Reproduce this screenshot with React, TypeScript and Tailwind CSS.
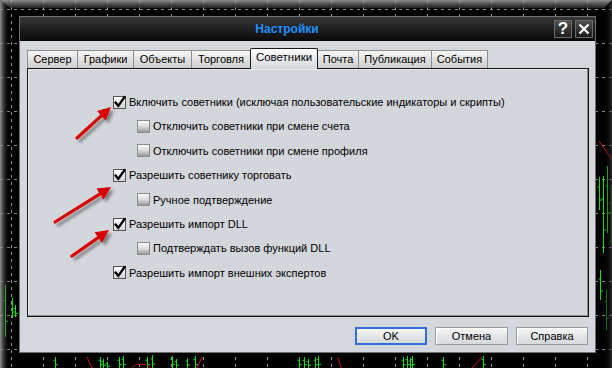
import React from "react";

type Row = { label: string; checked: boolean; indent: boolean };

const rows: Row[] = [
  { label: "Включить советники (исключая пользовательские индикаторы и скрипты)", checked: true, indent: false },
  { label: "Отключить советники при смене счета", checked: false, indent: true },
  { label: "Отключить советники при смене профиля", checked: false, indent: true },
  { label: "Разрешить советнику торговать", checked: true, indent: false },
  { label: "Ручное подтверждение", checked: false, indent: true },
  { label: "Разрешить импорт DLL", checked: true, indent: false },
  { label: "Подтверждать вызов функций DLL", checked: false, indent: true },
  { label: "Разрешить импорт внешних экспертов", checked: true, indent: false },
];

const tabs: { label: string; w: number; active?: boolean }[] = [
  { label: "Сервер", w: 50 },
  { label: "Графики", w: 56 },
  { label: "Объекты", w: 58 },
  { label: "Торговля", w: 59 },
  { label: "Советники", w: 68, active: true },
  { label: "Почта", w: 40 },
  { label: "Публикация", w: 73 },
  { label: "События", w: 57 },
];

function Box({ checked }: { checked: boolean }) {
  return checked ? (
    <span className="relative w-[13px] h-[13px] shrink-0 border border-[#555] bg-gradient-to-b from-[#ffffff] to-[#d6d6d6]">
      <svg className="absolute left-0 top-0 overflow-visible" width="11" height="11" viewBox="0 0 11 11">
        <path d="M1.6 5.6 L4.3 8.8 L10.4 0.2" stroke="#000" strokeWidth="2.3" fill="none" strokeLinecap="square" />
      </svg>
    </span>
  ) : (
    <span className="w-[13px] h-[13px] shrink-0 border border-[#8a8a8a] bg-gradient-to-b from-[#fafafa] via-[#dcdcdc] to-[#9a9a9a]" />
  );
}

function Arrow({ x1, y1, x2, y2 }: { x1: number; y1: number; x2: number; y2: number }) {
  const dx = x2 - x1;
  const dy = y2 - y1;
  const len = Math.sqrt(dx * dx + dy * dy);
  const ux = dx / len;
  const uy = dy / len;
  const hl = 13;
  const hw = 6.5;
  const bx = x2 - ux * hl;
  const by = y2 - uy * hl;
  const px = -uy;
  const py = ux;
  const pts = `${x2},${y2} ${bx + px * hw},${by + py * hw} ${bx - px * hw},${by - py * hw}`;
  return (
    <g filter="url(#ash)">
      <line x1={x1} y1={y1} x2={bx + ux * 2} y2={by + uy * 2} stroke="#d80000" strokeWidth="3.2" strokeLinecap="round" />
      <polygon points={pts} fill="#d80000" />
    </g>
  );
}

function Chart() {
  const vx: number[] = [];
  for (let x = 11; x <= 611; x += 32) vx.push(x);
  const hy: number[] = [];
  for (let y = 9; y <= 360; y += 34) hy.push(y);
  const green: [number, number, number, string?][] = [
    [5, 285, 337], [12, 298, 318], [15, 305, 317],
    [599, 177, 210], [603, 176, 253], [607, 166, 233], [611, 185, 245, "#0a8a0a"],
    [600, 270, 300], [606, 290, 330, "#0a8a0a"],
    [55, 357, 368], [100, 357, 368], [103, 359, 368], [107, 362, 368], [119, 357, 368], [123, 356, 368],
    [147, 357, 368], [152, 355, 368], [172, 356, 368], [176, 359, 368], [187, 358, 368], [195, 356, 368],
    [299, 357, 368], [304, 357, 368], [308, 359, 368], [315, 357, 368], [318, 356, 368],
    [403, 357, 368], [407, 356, 368], [410, 358, 368], [412, 356, 368], [443, 357, 368], [483, 356, 368],
  ];
  return (
    <svg className="absolute left-0 top-0" width="612" height="368" viewBox="0 0 612 368">
      <defs>
        <linearGradient id="topb" x1="0" y1="0" x2="0" y2="1">
          <stop offset="0" stopColor="#a8a8a8" stopOpacity="0.85" />
          <stop offset="1" stopColor="#3a3a3a" stopOpacity="0.6" />
        </linearGradient>
        <linearGradient id="leftb" x1="0" y1="0" x2="1" y2="0">
          <stop offset="0" stopColor="#a0a0a0" stopOpacity="0.9" />
          <stop offset="1" stopColor="#000" stopOpacity="0" />
        </linearGradient>
        <linearGradient id="rightb" x1="0" y1="0" x2="1" y2="0">
          <stop offset="0" stopColor="#000" stopOpacity="0" />
          <stop offset="1" stopColor="#3a3a3a" stopOpacity="0.7" />
        </linearGradient>
      </defs>
      {vx.map((x) => (
        <line key={"v" + x} x1={x + 0.5} y1={0} x2={x + 0.5} y2={368} stroke="#c4c4c4" strokeWidth="1" strokeDasharray="3 4" opacity="0.75" />
      ))}
      {hy.map((y) => (
        <line key={"h" + y} x1={0} y1={y + 0.5} x2={612} y2={y + 0.5} stroke="#bdbdbd" strokeWidth="1" strokeDasharray="3 4" opacity="0.75" />
      ))}
      {green.map(([x, a, b, c], i) => (
        <g key={"g" + i}>
          <line x1={x + 0.5} y1={a} x2={x + 0.5} y2={b} stroke={c || "#18e018"} strokeWidth="1" />
          <line x1={x - 1.5} y1={a + (b - a) * 0.3} x2={x} y2={a + (b - a) * 0.3} stroke={c || "#18e018"} strokeWidth="1" />
          <line x1={x + 1} y1={a + (b - a) * 0.7} x2={x + 3} y2={a + (b - a) * 0.7} stroke={c || "#18e018"} strokeWidth="1" />
        </g>
      ))}
      <line x1={599} y1={141} x2={612} y2={160} stroke="#d01010" strokeWidth="1" />
      <line x1={87} y1={357} x2={92} y2={368} stroke="#d01010" strokeWidth="1" />
      <line x1={202} y1={357} x2={197} y2={368} stroke="#d01010" strokeWidth="1" />
      <line x1={338} y1={357} x2={341} y2={368} stroke="#d01010" strokeWidth="1" />
      <line x1={482} y1={357} x2={472} y2={368} stroke="#d01010" strokeWidth="1" />
      <ellipse cx={141} cy={374} rx={12} ry={10} stroke="#c01010" strokeWidth="1" fill="none" />
      <polygon points="0,0 612,0 604,8 10,8" fill="url(#topb)" />
      <polygon points="0,0 10,8 10,368 0,368" fill="url(#leftb)" />
      <polygon points="612,0 604,8 604,368 612,368" fill="url(#rightb)" />
    </svg>
  );
}

export default function App() {
  return (
    <div className="relative w-[612px] h-[368px] overflow-hidden bg-black font-['Liberation_Sans',Arial,sans-serif] text-[11px] text-black">
      <Chart />
      <div className="relative pt-[16px] pl-[19px]">
        <div className="w-[577px] h-[337px] flex flex-col border border-[#707070] bg-[#d4d7dc]">
          {/* title bar */}
          <div className="h-[24px] shrink-0 flex items-center bg-gradient-to-b from-[#383838] via-[#202020] to-[#0c0c0c] border-b border-[#050505]">
            <div className="flex-1 text-center text-[12px] font-bold text-[#1f8fff] pt-[1px]">Настройки</div>
            <div className="flex gap-[3px] pr-[2px]">
              <div className="w-[18px] h-[18px] flex items-center justify-center border border-[#6a6a6a] bg-gradient-to-b from-[#505050] to-[#1c1c1c] text-white font-bold text-[17px] leading-none">?</div>
              <div className="w-[18px] h-[18px] flex items-center justify-center border border-[#6a6a6a] bg-gradient-to-b from-[#505050] to-[#1c1c1c]">
                <svg width="12" height="12" viewBox="0 0 12 12">
                  <path d="M1.5 1.5 L10.5 10.5 M10.5 1.5 L1.5 10.5" stroke="#fff" strokeWidth="2.3" />
                </svg>
              </div>
            </div>
          </div>
          {/* body */}
          <div className="flex-1 flex flex-col pt-[7px] pl-[7px] pr-[6px]">
            <div className="relative z-10 flex items-end h-[21px] -mb-px">
              {tabs.map((t, i) => {
                const prevActive = i > 0 && tabs[i - 1].active;
                const last = i === tabs.length - 1;
                if (t.active) {
                  return (
                    <div
                      key={t.label}
                      style={{ width: t.w }}
                      className="h-[21px] flex items-center justify-center border-t border-l border-r border-[#1a1a1a] rounded-t-[2px] bg-gradient-to-b from-[#fcfcfc] to-[#d4d7dc] text-[11.5px] pb-[3px]"
                    >
                      {t.label}
                    </div>
                  );
                }
                return (
                  <div
                    key={t.label}
                    style={{ width: t.w }}
                    className={`h-[18px] mb-px flex items-center justify-center border-t border-[#8e8e8e] bg-gradient-to-b from-[#f6f6f6] to-[#cdcdcd] ${prevActive ? "" : "border-l"} ${last ? "border-r" : ""}`}
                  >
                    {t.label}
                  </div>
                );
              })}
            </div>
            <div className="h-[249px] shrink-0 border border-[#151515] bg-[#d3d6db] shadow-[inset_-1px_-1px_0_#8c8c8c,inset_1px_1px_0_#e6e8eb] pt-[21px] pl-[85px]">
              {rows.map((r) => (
                <div key={r.label} className={`h-[24.4px] flex items-center gap-[3px] ${r.indent ? "pl-[24px]" : ""}`}>
                  <Box checked={r.checked} />
                  <span className="whitespace-nowrap">{r.label}</span>
                </div>
              ))}
            </div>
            <div className="flex justify-end gap-[8px] mt-[10px] pr-[1px]">
              <button className="w-[72px] h-[18px] flex items-center justify-center border-2 border-[#2f6fd8] bg-gradient-to-b from-[#f6f6f6] to-[#d6d8dc] text-[11px]">
                OK
              </button>
              <button className="w-[73px] h-[18px] flex items-center justify-center border border-[#9a9a9a] shadow-[inset_1px_1px_0_#ffffff] bg-gradient-to-b from-[#f6f6f6] to-[#d6d8dc] text-[11px]">
                Отмена
              </button>
              <button className="w-[72px] h-[18px] flex items-center justify-center border border-[#9a9a9a] shadow-[inset_1px_1px_0_#ffffff] bg-gradient-to-b from-[#f6f6f6] to-[#d6d8dc] text-[11px]">
                Справка
              </button>
            </div>
          </div>
        </div>
      </div>
      <svg className="absolute left-0 top-0 pointer-events-none" width="612" height="368" viewBox="0 0 612 368">
        <defs>
          <filter id="ash" x="-30%" y="-30%" width="160%" height="160%">
            <feDropShadow dx="3" dy="3" stdDeviation="1.6" floodColor="#000" floodOpacity="0.4" />
          </filter>
        </defs>
        <Arrow x1={77} y1={138} x2={111} y2={107} />
        <Arrow x1={55} y1={222} x2={111} y2={187} />
        <Arrow x1={72} y1={256} x2={109} y2={230} />
      </svg>
    </div>
  );
}
